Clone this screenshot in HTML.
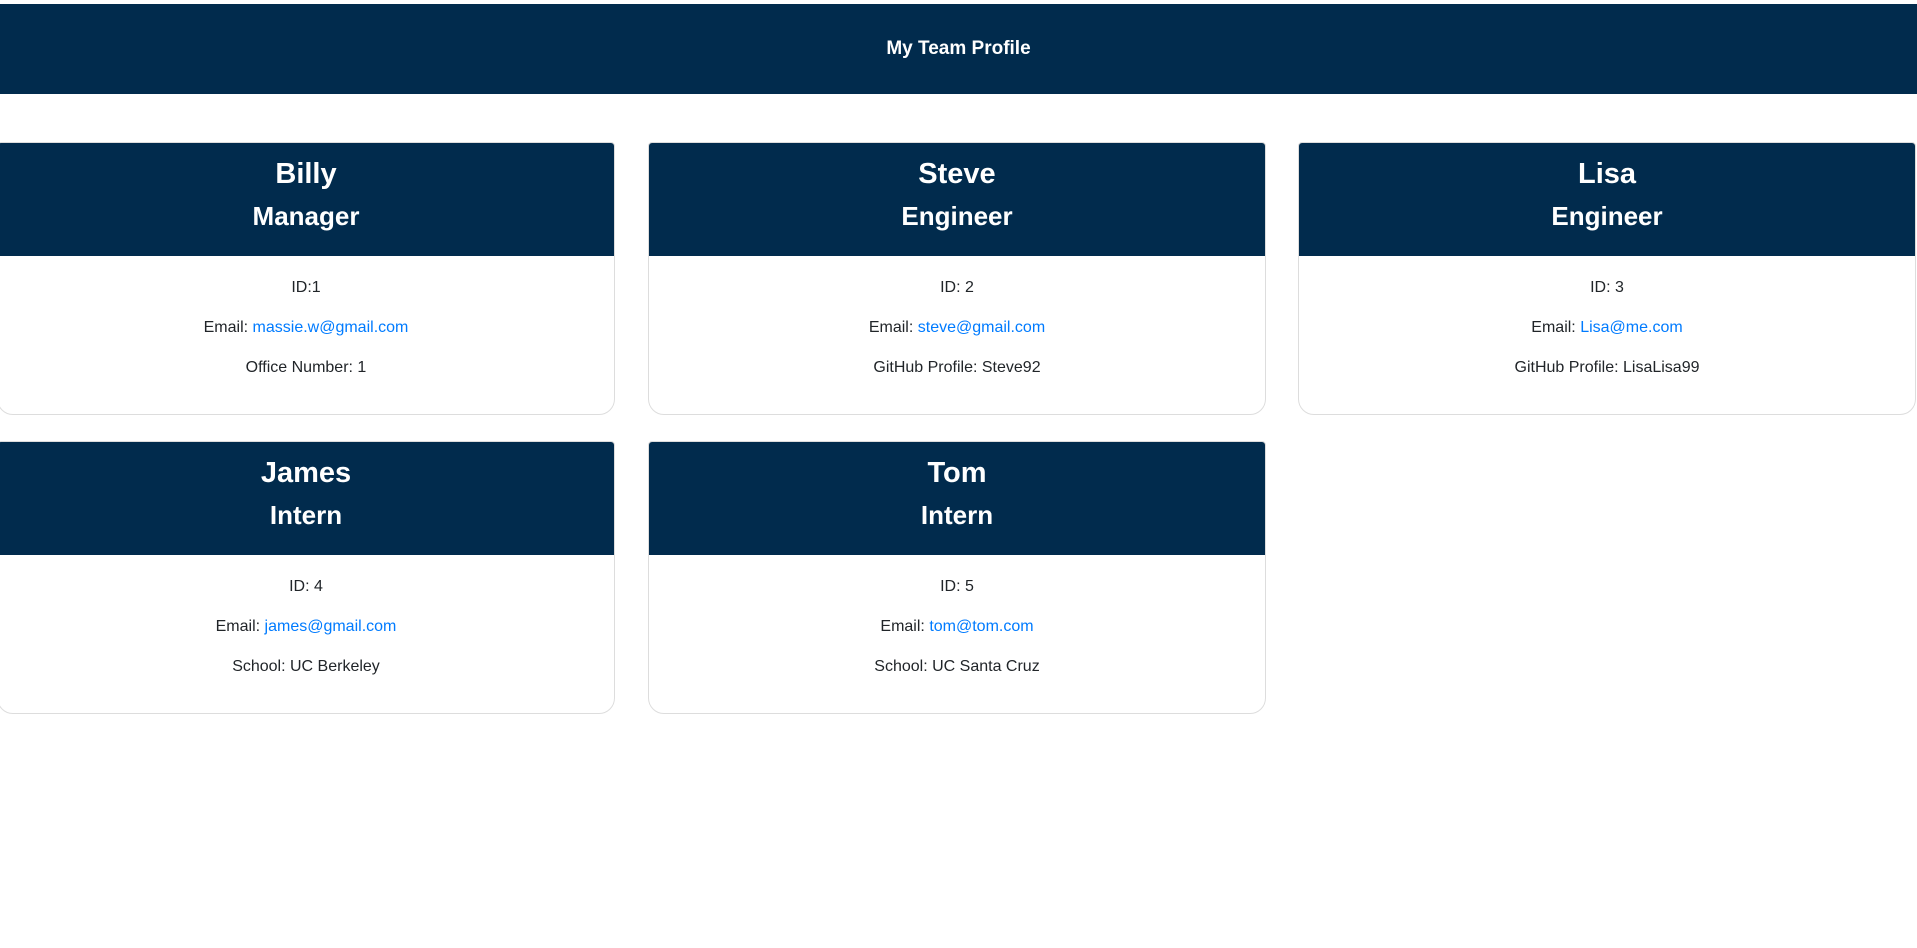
<!DOCTYPE html>
<html><head><meta charset="utf-8"><style>
*{box-sizing:border-box;margin:0;padding:0}
body{width:1917px;height:948px;background:#fff;font-family:"Liberation Sans",sans-serif;position:relative;overflow:hidden;color:#212529}
.top{position:absolute;left:0;top:4px;width:1917px;height:90px;background:#012b4d;color:#fff;font-weight:bold;font-size:19px;text-align:center;line-height:90px}
.card{position:absolute;width:618px;height:273px;border:1px solid #ddd;border-radius:4px 4px 16px 16px;overflow:hidden;background:#fff}
.h{height:113px;background:#012b4d;color:#fff;text-align:center;font-weight:bold}
.n{font-size:29px;padding-top:14px;line-height:34px}
.r{font-size:26px;line-height:30px;margin-top:10px}
.b{text-align:center;font-size:16px}
.b p{height:40px;line-height:20px}
.b p:first-child{margin-top:22px}
a{color:#007bff;text-decoration:none}
</style></head><body>
<div class="top">My Team Profile</div>
<div class="card" style="left:-3px;top:142px"><div class="h"><div class="n">Billy</div><div class="r">Manager</div></div><div class="b"><p>ID:1</p><p>Email: <a>massie.w@gmail.com</a></p><p>Office Number: 1</p></div></div>
<div class="card" style="left:648px;top:142px"><div class="h"><div class="n">Steve</div><div class="r">Engineer</div></div><div class="b"><p>ID: 2</p><p>Email: <a>steve@gmail.com</a></p><p>GitHub Profile: Steve92</p></div></div>
<div class="card" style="left:1298px;top:142px"><div class="h"><div class="n">Lisa</div><div class="r">Engineer</div></div><div class="b"><p>ID: 3</p><p>Email: <a>Lisa@me.com</a></p><p>GitHub Profile: LisaLisa99</p></div></div>
<div class="card" style="left:-3px;top:441px"><div class="h"><div class="n">James</div><div class="r">Intern</div></div><div class="b"><p>ID: 4</p><p>Email: <a>james@gmail.com</a></p><p>School: UC Berkeley</p></div></div>
<div class="card" style="left:648px;top:441px"><div class="h"><div class="n">Tom</div><div class="r">Intern</div></div><div class="b"><p>ID: 5</p><p>Email: <a>tom@tom.com</a></p><p>School: UC Santa Cruz</p></div></div>
</body></html>
